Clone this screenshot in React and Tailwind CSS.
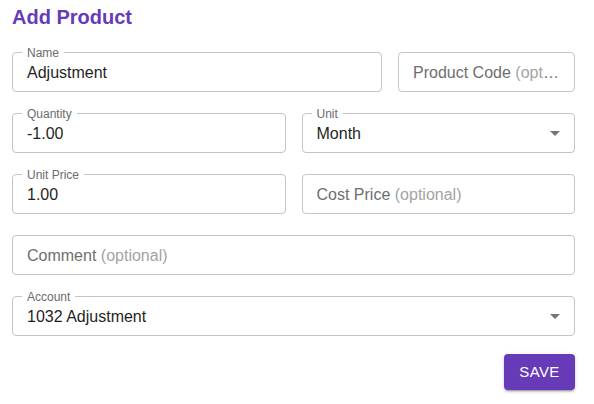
import { useState } from 'react';

const font = { fontFamily: '"Liberation Sans", Arial, Helvetica, sans-serif' };

function Caret() {
  return (
    <svg viewBox="0 0 24 24" className="absolute right-[7px] top-1/2 -translate-y-1/2 w-6 h-6 fill-[#757575]">
      <path d="M7 10l5 5 5-5z" />
    </svg>
  );
}

function Field({ label, value, hint, select, className = '' }) {
  const filled = value !== undefined && value !== '';
  return (
    <div className={`relative h-10 rounded-[4px] border border-[#c4c4c4] bg-white ${className}`}>
      {filled && (
        <span className="absolute left-[9px] -top-2 px-[5px] bg-white text-xs leading-4 text-[#6b6b6b]">
          {label}
        </span>
      )}
      <div className={`flex h-full items-center pl-[14px] pt-px ${select ? 'pr-9' : 'pr-[14px]'}`}>
        {filled ? (
          <span className="text-base text-[#1f1f1f] truncate">{value}</span>
        ) : (
          <span className="text-base truncate text-[#6e6e6e]">
            {label}
            {hint && <span className="text-[#a3a3a3]"> {hint}</span>}
          </span>
        )}
      </div>
      {select && <Caret />}
    </div>
  );
}

export default function App() {
  const [form] = useState({
    name: 'Adjustment',
    quantity: '-1.00',
    unit: 'Month',
    unitPrice: '1.00',
    account: '1032 Adjustment',
  });

  return (
    <div className="w-[594px] h-[404px] bg-white pl-3 pr-[19px] pt-[5px]" style={font}>
      <h2 className="text-[20px] leading-6 font-bold text-[#673ab7]">Add Product</h2>

      <div className="mt-[23px] grid grid-cols-12 gap-x-4 gap-y-[21px]">
        <Field className="col-span-8" label="Name" value={form.name} />
        <Field className="col-span-4" label="Product Code" hint="(optional)" />

        <Field className="col-span-6" label="Quantity" value={form.quantity} />
        <Field className="col-span-6" label="Unit" value={form.unit} select />

        <Field className="col-span-6" label="Unit Price" value={form.unitPrice} />
        <Field className="col-span-6" label="Cost Price" hint="(optional)" />

        <Field className="col-span-12" label="Comment" hint="(optional)" />

        <Field className="col-span-12" label="Account" value={form.account} select />
      </div>

      <div className="mt-[18px] flex justify-end">
        <button className="h-9 w-[71px] rounded-[4px] bg-[#673ab7] text-white text-[15px] font-medium tracking-[0.4px] uppercase shadow-[0_3px_1px_-2px_rgba(0,0,0,0.2),0_2px_2px_0_rgba(0,0,0,0.14),0_1px_5px_0_rgba(0,0,0,0.12)]">
          Save
        </button>
      </div>
    </div>
  );
}
